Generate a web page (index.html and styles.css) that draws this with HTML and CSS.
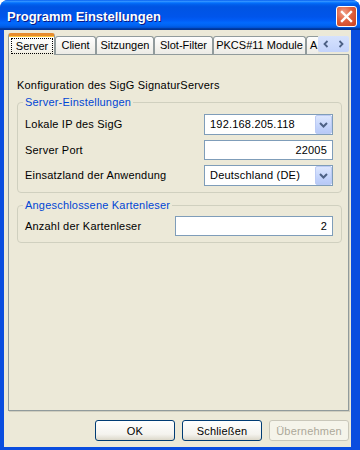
FILE: index.html
```html
<!DOCTYPE html>
<html lang="de">
<head>
    <meta charset="UTF-8">
    <meta name="viewport" content="width=device-width, initial-scale=1.0">
    <title>Programm Einstellungen</title>
    <link rel="stylesheet" href="styles.css">
</head>
<body>
    <div class="window">
        <div class="titlebar">
            <span class="title">Programm Einstellungen</span>
            <button class="close" type="button" aria-label="Schließen">
                <svg width="13" height="13" viewBox="0 0 13 13"><path d="M2 2 L11 11 M11 2 L2 11" stroke="#fff" stroke-width="2.4" stroke-linecap="square"/></svg>
            </button>
        </div>

        <div class="client">
            <div class="tabstrip">
                <div class="tab active"><span class="focus">Server</span></div>
                <div class="tab tab-client">Client</div>
                <div class="tab tab-sitzungen">Sitzungen</div>
                <div class="tab tab-slot">Slot-Filter</div>
                <div class="tab tab-pkcs">PKCS#11 Module</div>
                <div class="tab tab-clip">A</div>
                <div class="tab-scroll">
                    <span class="scroll-btn"><svg width="6" height="8" viewBox="0 0 6 8"><path d="M4.5 1 L1.5 4 L4.5 7" fill="none" stroke="#4d6185" stroke-width="1.8"/></svg></span>
                    <span class="scroll-btn"><svg width="6" height="8" viewBox="0 0 6 8"><path d="M1.5 1 L4.5 4 L1.5 7" fill="none" stroke="#4d6185" stroke-width="1.8"/></svg></span>
                </div>
            </div>

            <div class="panel">
                <p class="intro">Konfiguration des SigG SignaturServers</p>

                <fieldset class="group">
                    <legend>Server-Einstellungen</legend>
                    <div class="row">
                        <label>Lokale IP des SigG</label>
                        <div class="combo">
                            <span class="combo-text">192.168.205.118</span>
                            <span class="drop"><svg width="9" height="6" viewBox="0 0 9 6"><path d="M1 1 L4.5 4.5 L8 1" fill="none" stroke="#4d6185" stroke-width="2"/></svg></span>
                        </div>
                    </div>
                    <div class="row">
                        <label>Server Port</label>
                        <div class="field">22005</div>
                    </div>
                    <div class="row">
                        <label>Einsatzland der Anwendung</label>
                        <div class="combo">
                            <span class="combo-text">Deutschland (DE)</span>
                            <span class="drop"><svg width="9" height="6" viewBox="0 0 9 6"><path d="M1 1 L4.5 4.5 L8 1" fill="none" stroke="#4d6185" stroke-width="2"/></svg></span>
                        </div>
                    </div>
                </fieldset>

                <fieldset class="group group-readers">
                    <legend>Angeschlossene Kartenleser</legend>
                    <div class="row">
                        <label>Anzahl der Kartenleser</label>
                        <div class="field field-wide">2</div>
                    </div>
                </fieldset>
            </div>

            <div class="buttons">
                <button class="btn" type="button">OK</button>
                <button class="btn" type="button">Schließen</button>
                <button class="btn" type="button" disabled>Übernehmen</button>
            </div>
        </div>
    </div>
</body>
</html>
```

FILE: styles.css
```css
:root {
    --face: #ece9d8;
    --tab-border: #919b9c;
    --input-border: #7f9db9;
    --group-title: #0046d5;
}

body {
    margin: 0;
    font-family: 'Liberation Sans', Arial, sans-serif;
    font-size: 11px;
    line-height: 13px;
    letter-spacing: 0.2px;
    color: #000;
}

.window {
    width: 360px;
    height: 450px;
    display: flex;
    flex-direction: column;
    background: #0a4ddf;
    border-radius: 8px 8px 0 0;
    overflow: hidden;
}

.titlebar {
    height: 30px;
    flex: none;
    display: flex;
    align-items: center;
    justify-content: space-between;
    padding: 0 3px 0 7px;
    box-sizing: border-box;
    background: linear-gradient(to bottom, #0058ee 0%, #3593ff 4%, #288eff 6%, #127dff 8%, #036ffc 10%, #0262ee 14%, #0057e5 20%, #0054e3 24%, #0055eb 56%, #005bf5 66%, #026afe 76%, #0062ef 86%, #0052d6 92%, #0040ab 94%, #003092 100%);
}

.title {
    color: #fff;
    font-weight: bold;
    font-size: 13px;
    letter-spacing: 0;
    text-shadow: 1px 1px 0 #0a1883;
    margin-top: 2px;
}

.close {
    width: 21px;
    height: 21px;
    margin-top: 3px;
    padding: 0;
    display: flex;
    align-items: center;
    justify-content: center;
    border: 1px solid #fff;
    border-radius: 3px;
    background: radial-gradient(circle at 35% 30%, #f0a08a 0%, #e0603e 45%, #c8401c 100%);
}

.client {
    flex: 1;
    margin: 0 9px 3px 4px;
    padding: 0 2px 0 4px;
    background: var(--face);
    display: flex;
    flex-direction: column;
}

/* tabs */
.tabstrip {
    height: 24px;
    display: flex;
    align-items: flex-end;
}

.tab {
    height: 18px;
    box-sizing: border-box;
    padding-top: 2px;
    border: 1px solid var(--tab-border);
    border-bottom: none;
    border-radius: 3px 3px 0 0;
    background: linear-gradient(#fefefe, #f4f3ee 60%, #ecebe6);
    text-align: center;
    white-space: nowrap;
    letter-spacing: 0;
}

.tab.active {
    position: relative;
    z-index: 1;
    width: 47px;
    height: 22px;
    margin-bottom: -1px;
    padding-top: 0;
    border-top: 3px solid #e68b2c;
    box-shadow: inset 0 1px 0 #ffc83c;
    background: linear-gradient(#fffffe, #f7f6f1 70%, var(--face));
}

.focus {
    display: block;
    margin: 2px 1px 0 2px;
    height: 16px;
    box-sizing: border-box;
    border: 1px dotted #000;
    line-height: 14px;
}

.tab-client { width: 41px; }
.tab-sitzungen { width: 58px; }
.tab-slot { width: 59px; }
.tab-pkcs { width: 93px; }

.tab-clip {
    width: 12px;
    overflow: hidden;
    text-align: left;
    padding-left: 3px;
    border-right: none;
    border-radius: 3px 0 0 0;
}

.tab-scroll {
    width: 31px;
    height: 16px;
    margin-bottom: 2px;
    display: flex;
    background: linear-gradient(#d6e2fd, #c3d3fb);
    border-radius: 2px;
}

.scroll-btn {
    flex: 1;
    display: flex;
    align-items: center;
    justify-content: center;
}

/* page */
.panel {
    height: 357px;
    flex: none;
    box-sizing: border-box;
    border: 1px solid var(--tab-border);
    box-shadow: 1px 1px 0 #d0cebf;
    padding: 24px 6px 0 8px;
}

.intro {
    margin: 0;
}

.group {
    margin: 4px 0 0 0;
    padding: 5px 8px 6px 7px;
    border: 1px solid #d0d0bf;
    border-radius: 4px;
}

.group legend {
    margin-left: -2px;
    padding: 0 2px;
    color: var(--group-title);
}

.group-readers {
    margin-top: 6px;
    padding-top: 4px;
}

.row {
    display: flex;
    align-items: center;
    justify-content: space-between;
}

.row + .row {
    margin-top: 5px;
}

.combo {
    width: 129px;
    height: 21px;
    box-sizing: border-box;
    border: 1px solid var(--input-border);
    background: #fff;
    display: flex;
    align-items: center;
    justify-content: space-between;
}

.combo-text {
    padding-left: 5px;
}

.drop {
    width: 17px;
    height: 19px;
    box-sizing: border-box;
    display: flex;
    align-items: center;
    justify-content: center;
    border: 1px solid #bccbf4;
    border-radius: 2px;
    background: linear-gradient(#dde7fe, #c4d4fb 60%, #b7c9f7);
}

.field {
    width: 129px;
    height: 20px;
    box-sizing: border-box;
    border: 1px solid var(--input-border);
    background: #fff;
    padding: 3px 5px 0 0;
    text-align: right;
}

.field-wide {
    width: 158px;
}

/* dialog buttons */
.buttons {
    display: flex;
    justify-content: flex-end;
    gap: 7px;
    margin-top: 9px;
}

.btn {
    width: 80px;
    height: 21px;
    padding: 0;
    border: 1px solid #003c74;
    border-radius: 3px;
    background: linear-gradient(#fff, #f4f3ee 70%, #dcd8ca);
    font-family: 'Liberation Sans', Arial, sans-serif;
    font-size: 11px;
    font-weight: normal;
    letter-spacing: 0.2px;
    color: #000;
}

.btn:disabled {
    border-color: #c9c7ba;
    background: #f5f4ea;
    color: #aca899;
}
```
